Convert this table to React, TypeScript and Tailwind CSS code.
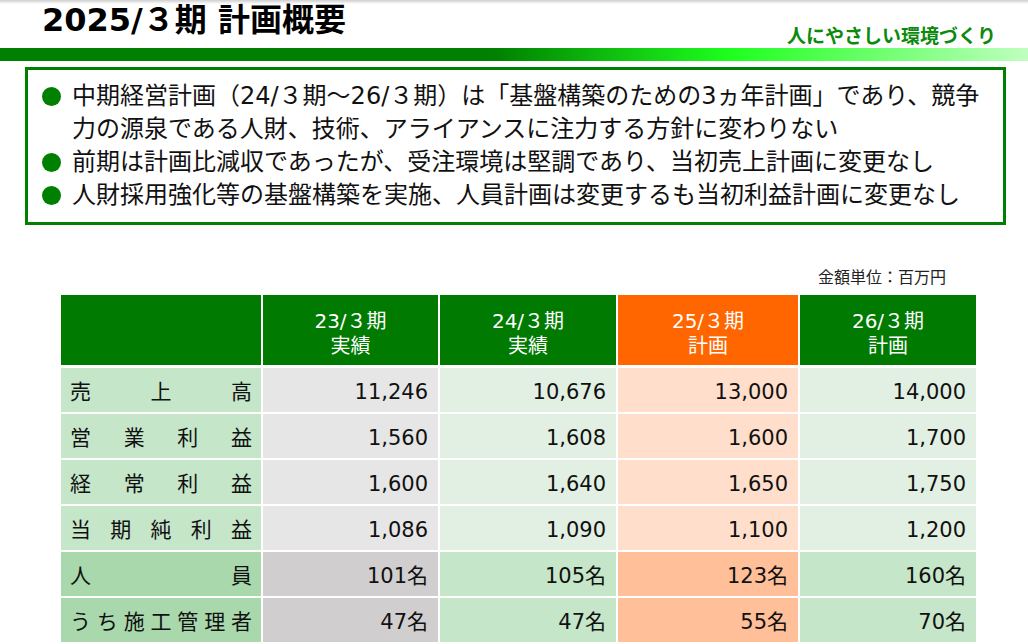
const FONT = '"DejaVu Sans", "Noto Sans CJK JP", sans-serif'

type Row = {
  label: string
  values: [string, string, string, string]
  strong?: boolean
}

const rows: Row[] = [
  { label: '売上高', values: ['11,246', '10,676', '13,000', '14,000'] },
  { label: '営業利益', values: ['1,560', '1,608', '1,600', '1,700'] },
  { label: '経常利益', values: ['1,600', '1,640', '1,650', '1,750'] },
  { label: '当期純利益', values: ['1,086', '1,090', '1,100', '1,200'] },
  { label: '人員', values: ['101名', '105名', '123名', '160名'], strong: true },
  { label: 'うち施工管理者', values: ['47名', '47名', '55名', '70名'], strong: true },
]

const heads = [
  { top: '23/３期', bottom: '実績', bg: 'bg-[#007a00]' },
  { top: '24/３期', bottom: '実績', bg: 'bg-[#007a00]' },
  { top: '25/３期', bottom: '計画', bg: 'bg-[#ff6600]' },
  { top: '26/３期', bottom: '計画', bg: 'bg-[#007a00]' },
]

// cell colours per column, light rows vs. headcount rows
const cellBg = [
  ['bg-[#e6e6e6]', 'bg-[#d0cece]'],
  ['bg-[#e2f0e3]', 'bg-[#c5e6c9]'],
  ['bg-[#ffdfcc]', 'bg-[#ffbf99]'],
  ['bg-[#e2f0e3]', 'bg-[#c5e6c9]'],
]

const bullets = [
  '中期経営計画（24/３期～26/３期）は「基盤構築のための3ヵ年計画」であり、競争力の源泉である人財、技術、アライアンスに注力する方針に変わりない',
  '前期は計画比減収であったが、受注環境は堅調であり、当初売上計画に変更なし',
  '人財採用強化等の基盤構築を実施、人員計画は変更するも当初利益計画に変更なし',
]

function Bullet({ text }: { text: string }) {
  return (
    <div className="flex gap-[11px]">
      <span className="mt-[7px] h-[19px] w-[19px] shrink-0 rounded-full bg-[#008000]" />
      <p className="text-[24px] leading-[33px] text-[#111]">{text}</p>
    </div>
  )
}

export default function App() {
  return (
    <div className="h-[644px] w-[1028px] overflow-hidden bg-white" style={{ fontFamily: FONT }}>
      <div className="h-[4px] bg-gradient-to-b from-[#cfcfcf] to-white" />
      <header className="-mt-[4px] flex h-[48px] items-end justify-between">
        <h1 className="self-start pl-[42px] pt-[1px] text-[32px] font-bold leading-[38px] text-black">
          2025/３期 計画概要
        </h1>
        <span className="pb-[1px] pr-[32px] text-[19px] font-bold leading-[22px] text-[#0b8a0b]">
          人にやさしい環境づくり
        </span>
      </header>
      <div className="h-[13px] bg-[linear-gradient(to_right,#008000_0%,#008000_48%,#1eff1e_71%,#bfffbf_100%)]" />

      <section className="ml-[25px] mt-[6px] w-[981px] border-[3px] border-[#008000] py-[10px] pl-[14px] pr-[10px]">
        {bullets.map((b) => (
          <Bullet key={b} text={b} />
        ))}
      </section>

      <div className="ml-[61px] w-[915px]">
        <p className="mt-[43px] pr-[30px] text-right text-[16px] leading-[20px] text-[#222]">
          金額単位：百万円
        </p>
        <div className="mt-[7px] grid grid-cols-[200px_175px_176px_180px_176px] gap-[2px]">
          <div className="mb-[1px] h-[70px] bg-[#007a00]" />
          {heads.map((h) => (
            <div
              key={h.top}
              className={`mb-[1px] flex h-[70px] flex-col items-center justify-center pt-[7px] text-[20px] leading-[25px] text-white ${h.bg}`}
            >
              <span>{h.top}</span>
              <span>{h.bottom}</span>
            </div>
          ))}

          {rows.map((r) => (
            <RowCells key={r.label} row={r} />
          ))}
        </div>
      </div>
    </div>
  )
}

function RowCells({ row }: { row: Row }) {
  const shade = row.strong ? 1 : 0
  return (
    <>
      <div
        className={`flex h-[44px] items-center justify-between px-[9px] pt-[6px] text-[21px] text-[#111] ${
          row.strong ? 'bg-[#a9d8ad]' : 'bg-[#c6e6c9]'
        }`}
      >
        {row.label.split('').map((c, i) => (
          <span key={i}>{c}</span>
        ))}
      </div>
      {row.values.map((v, i) => (
        <div
          key={i}
          className={`flex h-[44px] items-center justify-end pr-[10px] pt-[6px] text-[21px] text-[#111] ${cellBg[i][shade]}`}
        >
          {v}
        </div>
      ))}
    </>
  )
}
